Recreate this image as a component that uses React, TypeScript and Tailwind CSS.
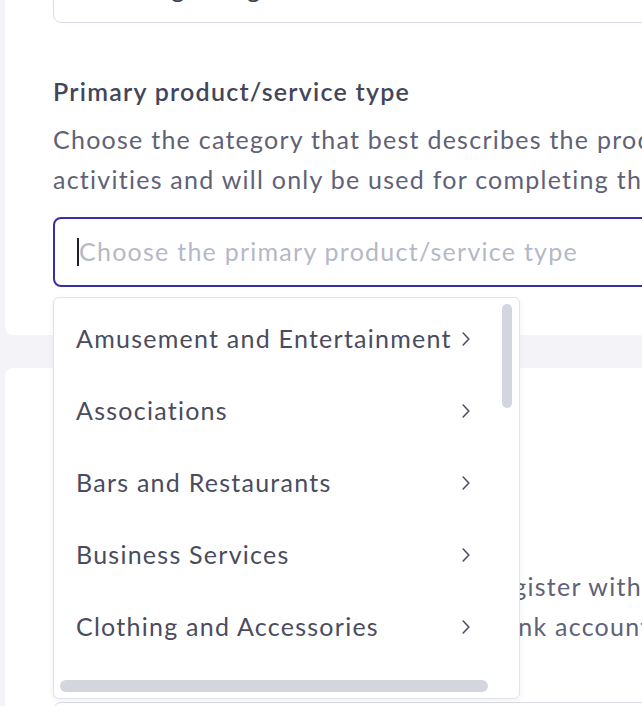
const categories = [
  "Amusement and Entertainment",
  "Associations",
  "Bars and Restaurants",
  "Business Services",
  "Clothing and Accessories",
];

function Chevron() {
  return (
    <svg width="8" height="14" viewBox="0 0 8 14" fill="none" className="shrink-0">
      <polyline points="1.2,1 6.8,7 1.2,13" stroke="currentColor" strokeWidth="1.5" strokeLinecap="round" strokeLinejoin="round" />
    </svg>
  );
}

function CategoryMenu() {
  return (
    <div className="absolute left-0 top-[calc(100%+10px)] z-10 h-[402px] w-[467px] overflow-hidden rounded-md border border-[#e1e2ea] bg-white shadow-[0_2px_6px_rgba(40,40,80,0.06)]">
      <ul className="pt-[5px]">
        {categories.map((c) => (
          <li
            key={c}
            className="flex h-[72px] w-[416px] items-center justify-between pl-[22px] text-[#4a4c5e]"
          >
            <span className="whitespace-nowrap">{c}</span>
            <Chevron />
          </li>
        ))}
      </ul>
      {/* scrollbars */}
      <div className="absolute right-[7px] top-[6px] h-[104px] w-[10px] rounded-full bg-[#d4d6df]" />
      <div className="absolute bottom-[6px] left-[6px] h-[12px] w-[428px] rounded-full bg-[#d4d6df]" />
    </div>
  );
}

export default function App() {
  return (
    <div
      className="h-[706px] overflow-hidden bg-[#f4f4f8] pl-[5px] text-[25px] tracking-[0.05em]"
      style={{ fontFamily: "Lato, 'Open Sans', sans-serif" }}
    >
      <section className="w-[900px] rounded-bl-lg bg-white pb-[48px] pl-[48px]">
        <div className="-mt-[47px] h-[70px] rounded-lg border border-[#dcdde5] pl-[24px] pt-[16px] text-[#3d4052]">
          Wedding Designs
        </div>

        <h2 className="mt-[52px] text-[25px] font-semibold leading-[32px] text-[#43465a]">
          Primary product/service type
        </h2>
        <p className="mt-[12px] leading-[40px] text-[#5f6277]">
          <span className="block whitespace-nowrap">
            Choose the category that best describes the products or services you sell.
          </span>
          <span className="block whitespace-nowrap">
            activities and will only be used for completing the application.
          </span>
        </p>

        <div className="relative mt-[18px] w-[700px]">
          <div className="flex h-[70px] items-center rounded-lg border-2 border-[#3a2ea6] pl-[22px]">
            <span className="h-[28px] w-[2px] bg-[#1e1e2a]" />
            <span className="text-[#b5b8c7]">Choose the primary product/service type</span>
          </div>
          <CategoryMenu />
        </div>
      </section>

      <section className="mt-[33px] h-[400px] w-[900px] rounded-tl-lg bg-white pl-[48px] pt-[40px]">
        <h2 className="text-[25px] font-semibold leading-[32px] text-[#43465a]">
          Business registration
        </h2>
        <p className="mt-[126px] leading-[40px] text-[#5f6277]">
          <span className="block whitespace-nowrap">
            Enter the full business name as you register with the IRS.
          </span>
          <span className="block whitespace-nowrap">
            It must also match the name on the bank account.
          </span>
        </p>
        <div className="mt-[56px] h-[70px] w-[700px] rounded-lg border border-[#dcdde5]" />
      </section>
    </div>
  );
}
